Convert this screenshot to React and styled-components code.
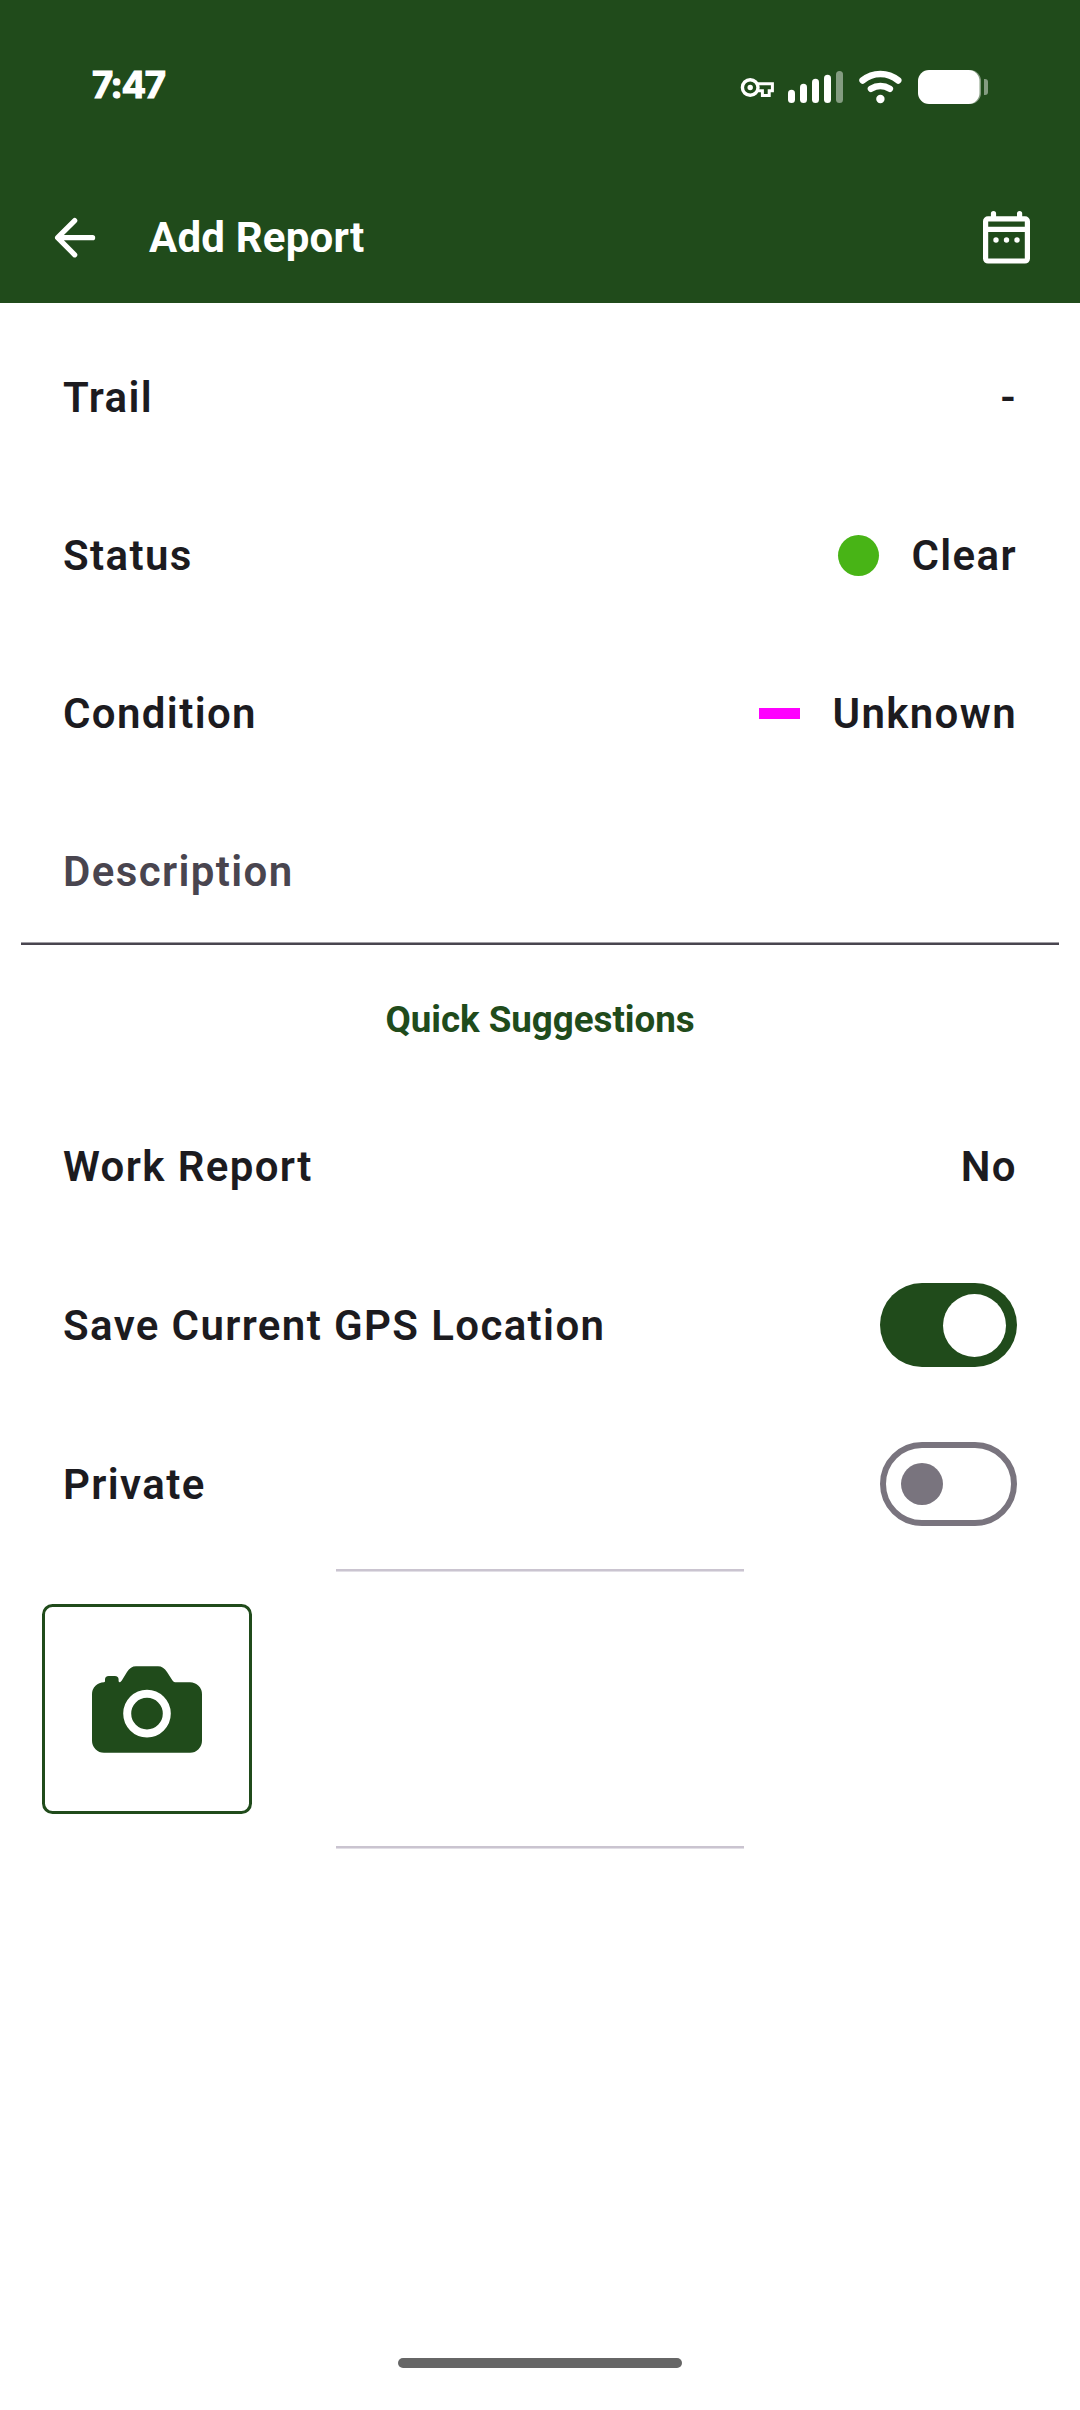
import React from 'react';
import styled, { createGlobalStyle } from 'styled-components';

const GREEN = '#204b1b';

const GlobalStyle = createGlobalStyle`
  * {
    box-sizing: border-box;
  }

  body {
    margin: 0;
    background: #ffffff;
    font-family: Roboto, 'Liberation Sans', sans-serif;
  }
`;

const Screen = styled.div`
  display: flex;
  flex-direction: column;
  width: 1080px;
  height: 2410px;
  background: #ffffff;
  color: #1c1b1f;
`;

const Header = styled.header`
  height: 303px;
  background: ${GREEN};
  color: #ffffff;
`;

const StatusBar = styled.div`
  display: flex;
  justify-content: space-between;
  align-items: center;
  height: 174px;
  padding: 0 92px 0 92px;
`;

const Clock = styled.span`
  font-family: Inter, Roboto, sans-serif;
  font-size: 36.5px;
  font-weight: 700;
  letter-spacing: -1.4px;
  line-height: 40px;
  margin-bottom: 4px;
  -webkit-text-stroke: 1.2px #ffffff;
  stroke-linejoin: round;
`;

const StatusIcons = styled.svg`
  display: block;
  width: 248px;
  height: 34px;
`;

const Toolbar = styled.div`
  display: flex;
  align-items: center;
  height: 127px;
  padding: 0 50px 0 54px;
`;

const Title = styled.h1`
  flex: 1;
  margin: 0 0 0 53px;
  font-size: 42px;
  font-weight: 700;
  line-height: 56px;
  letter-spacing: 0.2px;
`;

const Icon = styled.svg`
  display: block;
  flex: none;
  width: ${(p) => p.$width}px;
  height: ${(p) => p.$height}px;
`;

const Form = styled.main`
  display: flex;
  flex-direction: column;
  flex: 1;
  padding-top: 15.5px;
`;

const Row = styled.div`
  display: flex;
  justify-content: space-between;
  align-items: center;
  height: ${(p) => p.$height || 158}px;
  padding: 0 63px;
`;

const Label = styled.span`
  font-size: 42px;
  font-weight: 650;
  line-height: 63px;
  letter-spacing: 1.38px;
`;

const Value = styled.div`
  display: flex;
  align-items: center;
  gap: 32px;
`;

const StatusDot = styled.span`
  width: 41px;
  height: 41px;
  border-radius: 50%;
  background: #48b416;
`;

const ConditionBar = styled.span`
  width: 41px;
  height: 11px;
  background: #ff00ff;
`;

const DescriptionField = styled.div`
  display: flex;
  align-items: center;
  height: 152.5px;
  margin: 0 21px;
  padding: 7px 42px 0;
  border-bottom: 2px solid #49454f;
  box-shadow: inset 0 -1px 0 #a09ea4;
  color: #49454f;
`;

const SuggestionsButton = styled.button`
  height: 143px;
  padding: 6px 0 0;
  border: 0;
  background: none;
  color: ${GREEN};
  font-family: inherit;
  font-size: 36.75px;
  font-weight: 700;
  line-height: 50px;
  letter-spacing: -0.04px;
`;

const Track = styled.span`
  display: flex;
  align-items: center;
  justify-content: ${(p) => (p.$on ? 'flex-end' : 'flex-start')};
  width: 137px;
  height: 84px;
  padding: 0 ${(p) => (p.$on ? 11 : 15)}px;
  border: ${(p) => (p.$on ? '0' : '6px solid #79747e')};
  border-radius: 42px;
  background: ${(p) => (p.$on ? GREEN : 'transparent')};
`;

const Thumb = styled.span`
  width: ${(p) => (p.$on ? 63 : 42)}px;
  height: ${(p) => (p.$on ? 63 : 42)}px;
  border-radius: 50%;
  background: ${(p) => (p.$on ? '#ffffff' : '#79747e')};
`;

const Photos = styled.section`
  display: flex;
  flex-direction: column;
  gap: 32px;
  margin-top: 5.5px;
`;

const Divider = styled.div`
  align-self: center;
  width: 408px;
  height: 3px;
  border-bottom: 1px solid #e2dfe6;
  background: #cac4d0;
`;

const PhotoButton = styled.div`
  display: flex;
  justify-content: center;
  align-items: center;
  width: 210px;
  height: 210px;
  margin-left: 42px;
  border: 3px solid ${GREEN};
  border-radius: 10.5px;
`;

const HomeBar = styled.div`
  align-self: center;
  width: 284px;
  height: 10px;
  margin: auto 0 42px;
  border-radius: 5px;
  background: #666666;
`;

const Status = () => (
  <StatusIcons viewBox="740 70 248 34" fill="#ffffff">
    <circle cx="750.2" cy="87.5" r="7.8" fill="none" stroke="#ffffff" strokeWidth="3.4" />
    <circle cx="750.2" cy="87.5" r="2.7" />
    <path
      d="M757 83.7H772.4V90.8H769.2V95.4H762.4V90.8H757"
      fill="none"
      stroke="#ffffff"
      strokeWidth="3"
    />
    <rect x="788" y="89.7" width="7" height="13.3" rx="3.5" />
    <rect x="800" y="83.7" width="7" height="19.3" rx="3.5" />
    <rect x="812" y="78.7" width="7" height="24.3" rx="3.5" />
    <rect x="824" y="74.7" width="7" height="28.3" rx="3.5" />
    <rect x="836" y="71" width="7" height="32" rx="3.5" opacity="0.45" />
    <g fill="none" stroke="#ffffff" strokeWidth="6.6" strokeLinecap="round">
      <path d="M862.6 80.4A28 28 0 0 1 898.2 80.4" />
      <path d="M871 88.8A18 18 0 0 1 889.8 88.8" />
    </g>
    <circle cx="880.4" cy="99" r="4.2" />
    <rect x="930" y="70" width="51" height="34" rx="11" opacity="0.45" />
    <rect x="918" y="70" width="61.5" height="34" rx="11" />
    <path d="M984 79h1a3 3 0 0 1 3 3v10a3 3 0 0 1-3 3h-1z" opacity="0.45" />
  </StatusIcons>
);

const BackIcon = () => (
  <Icon $width={42} $height={42} viewBox="0 0 42 42">
    <path
      d="M20.7 3.6L3.6 20.7 20.7 37.8M4 20.7H38.6"
      fill="none"
      stroke="#ffffff"
      strokeWidth="5.2"
      strokeLinecap="round"
      strokeLinejoin="round"
    />
  </Icon>
);

const CalendarIcon = () => (
  <Icon $width={47} $height={53} viewBox="0 0 47 53" fill="#ffffff">
    <path
      fillRule="evenodd"
      d="M5 5.3H7.9V2.6a2.6 2.6 0 0 1 5.2 0V5.3H34V2.6a2.6 2.6 0 0 1 5.2 0V5.3H42a5 5 0 0 1 5 5V47.6a5 5 0 0 1-5 5H5a5 5 0 0 1-5-5V10.3a5 5 0 0 1 5-5zM5.2 10.5V15.8H41.8V10.5zM5.2 21V47.4H41.8V21z"
    />
    <circle cx="13" cy="29" r="2.7" />
    <circle cx="23.5" cy="29" r="2.7" />
    <circle cx="34" cy="29" r="2.7" />
  </Icon>
);

const CameraIcon = () => (
  <Icon $width={110} $height={87} viewBox="0 0 110 87" fill={GREEN}>
    <path d="M12 16.2C12.8 16.2 13 15.8 13 15V13.6Q13 10 16.8 10H22.8Q26.6 10 26.6 13.6V15Q26.6 16.2 28 16.2Q29 15.8 29.8 14.5L35 6Q38.6 0.3 44 0.3H66Q71.4 0.3 75 6L80.5 14.5Q81.6 16.2 83 16.2H98A12 12 0 0 1 110 28.2V74.7A12 12 0 0 1 98 86.7H12A12 12 0 0 1 0 74.7V28.2A12 12 0 0 1 12 16.2Z" />
    <circle cx="55" cy="47.6" r="19.8" fill="none" stroke="#ffffff" strokeWidth="8" />
  </Icon>
);

const Switch = ({ on }) => (
  <Track $on={on}>
    <Thumb $on={on} />
  </Track>
);

const App = () => (
  <>
    <GlobalStyle />
    <Screen>
      <Header>
        <StatusBar>
          <Clock>7:47</Clock>
          <Status />
        </StatusBar>
        <Toolbar>
          <BackIcon />
          <Title>Add Report</Title>
          <CalendarIcon />
        </Toolbar>
      </Header>
      <Form>
        <Row>
          <Label>Trail</Label>
          <Label>-</Label>
        </Row>
        <Row>
          <Label>Status</Label>
          <Value>
            <StatusDot />
            <Label>Clear</Label>
          </Value>
        </Row>
        <Row>
          <Label>Condition</Label>
          <Value>
            <ConditionBar />
            <Label>Unknown</Label>
          </Value>
        </Row>
        <DescriptionField>
          <Label>Description</Label>
        </DescriptionField>
        <SuggestionsButton>Quick Suggestions</SuggestionsButton>
        <Row $height={157.5}>
          <Label>Work Report</Label>
          <Label>No</Label>
        </Row>
        <Row $height={159}>
          <Label>Save Current GPS Location</Label>
          <Switch on />
        </Row>
        <Row $height={159}>
          <Label>Private</Label>
          <Switch />
        </Row>
        <Photos>
          <Divider />
          <PhotoButton>
            <CameraIcon />
          </PhotoButton>
          <Divider />
        </Photos>
        <HomeBar />
      </Form>
    </Screen>
  </>
);

export default App;
